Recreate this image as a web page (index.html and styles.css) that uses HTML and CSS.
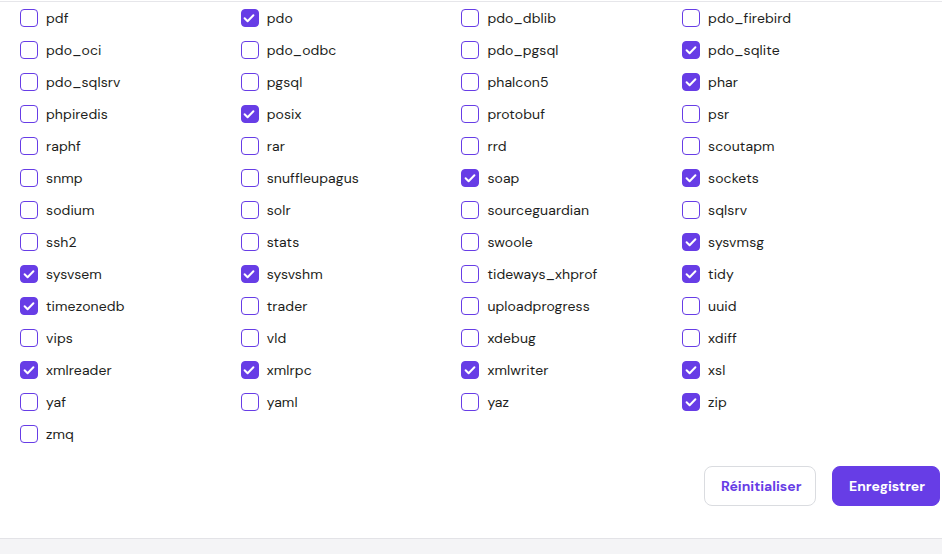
FILE: index.html
```html
<!DOCTYPE html>
<html lang="fr">
<head>
<meta charset="utf-8">
<link rel="stylesheet" href="styles.css">
</head>
<body>
<div class="page">
  <div class="card">
    <div class="grid">
      <label class="item"><span class="box"></span><span class="name">pdf</span></label>
      <label class="item"><span class="box checked"><svg viewBox="0 0 18 18"><path d="M4.6 9.3l3 2.9 5.8-6"/></svg></span><span class="name">pdo</span></label>
      <label class="item"><span class="box"></span><span class="name">pdo_dblib</span></label>
      <label class="item"><span class="box"></span><span class="name">pdo_firebird</span></label>

      <label class="item"><span class="box"></span><span class="name">pdo_oci</span></label>
      <label class="item"><span class="box"></span><span class="name">pdo_odbc</span></label>
      <label class="item"><span class="box"></span><span class="name">pdo_pgsql</span></label>
      <label class="item"><span class="box checked"><svg viewBox="0 0 18 18"><path d="M4.6 9.3l3 2.9 5.8-6"/></svg></span><span class="name">pdo_sqlite</span></label>

      <label class="item"><span class="box"></span><span class="name">pdo_sqlsrv</span></label>
      <label class="item"><span class="box"></span><span class="name">pgsql</span></label>
      <label class="item"><span class="box"></span><span class="name">phalcon5</span></label>
      <label class="item"><span class="box checked"><svg viewBox="0 0 18 18"><path d="M4.6 9.3l3 2.9 5.8-6"/></svg></span><span class="name">phar</span></label>

      <label class="item"><span class="box"></span><span class="name">phpiredis</span></label>
      <label class="item"><span class="box checked"><svg viewBox="0 0 18 18"><path d="M4.6 9.3l3 2.9 5.8-6"/></svg></span><span class="name">posix</span></label>
      <label class="item"><span class="box"></span><span class="name">protobuf</span></label>
      <label class="item"><span class="box"></span><span class="name">psr</span></label>

      <label class="item"><span class="box"></span><span class="name">raphf</span></label>
      <label class="item"><span class="box"></span><span class="name">rar</span></label>
      <label class="item"><span class="box"></span><span class="name">rrd</span></label>
      <label class="item"><span class="box"></span><span class="name">scoutapm</span></label>

      <label class="item"><span class="box"></span><span class="name">snmp</span></label>
      <label class="item"><span class="box"></span><span class="name">snuffleupagus</span></label>
      <label class="item"><span class="box checked"><svg viewBox="0 0 18 18"><path d="M4.6 9.3l3 2.9 5.8-6"/></svg></span><span class="name">soap</span></label>
      <label class="item"><span class="box checked"><svg viewBox="0 0 18 18"><path d="M4.6 9.3l3 2.9 5.8-6"/></svg></span><span class="name">sockets</span></label>

      <label class="item"><span class="box"></span><span class="name">sodium</span></label>
      <label class="item"><span class="box"></span><span class="name">solr</span></label>
      <label class="item"><span class="box"></span><span class="name">sourceguardian</span></label>
      <label class="item"><span class="box"></span><span class="name">sqlsrv</span></label>

      <label class="item"><span class="box"></span><span class="name">ssh2</span></label>
      <label class="item"><span class="box"></span><span class="name">stats</span></label>
      <label class="item"><span class="box"></span><span class="name">swoole</span></label>
      <label class="item"><span class="box checked"><svg viewBox="0 0 18 18"><path d="M4.6 9.3l3 2.9 5.8-6"/></svg></span><span class="name">sysvmsg</span></label>

      <label class="item"><span class="box checked"><svg viewBox="0 0 18 18"><path d="M4.6 9.3l3 2.9 5.8-6"/></svg></span><span class="name">sysvsem</span></label>
      <label class="item"><span class="box checked"><svg viewBox="0 0 18 18"><path d="M4.6 9.3l3 2.9 5.8-6"/></svg></span><span class="name">sysvshm</span></label>
      <label class="item"><span class="box"></span><span class="name">tideways_xhprof</span></label>
      <label class="item"><span class="box checked"><svg viewBox="0 0 18 18"><path d="M4.6 9.3l3 2.9 5.8-6"/></svg></span><span class="name">tidy</span></label>

      <label class="item"><span class="box checked"><svg viewBox="0 0 18 18"><path d="M4.6 9.3l3 2.9 5.8-6"/></svg></span><span class="name">timezonedb</span></label>
      <label class="item"><span class="box"></span><span class="name">trader</span></label>
      <label class="item"><span class="box"></span><span class="name">uploadprogress</span></label>
      <label class="item"><span class="box"></span><span class="name">uuid</span></label>

      <label class="item"><span class="box"></span><span class="name">vips</span></label>
      <label class="item"><span class="box"></span><span class="name">vld</span></label>
      <label class="item"><span class="box"></span><span class="name">xdebug</span></label>
      <label class="item"><span class="box"></span><span class="name">xdiff</span></label>

      <label class="item"><span class="box checked"><svg viewBox="0 0 18 18"><path d="M4.6 9.3l3 2.9 5.8-6"/></svg></span><span class="name">xmlreader</span></label>
      <label class="item"><span class="box checked"><svg viewBox="0 0 18 18"><path d="M4.6 9.3l3 2.9 5.8-6"/></svg></span><span class="name">xmlrpc</span></label>
      <label class="item"><span class="box checked"><svg viewBox="0 0 18 18"><path d="M4.6 9.3l3 2.9 5.8-6"/></svg></span><span class="name">xmlwriter</span></label>
      <label class="item"><span class="box checked"><svg viewBox="0 0 18 18"><path d="M4.6 9.3l3 2.9 5.8-6"/></svg></span><span class="name">xsl</span></label>

      <label class="item"><span class="box"></span><span class="name">yaf</span></label>
      <label class="item"><span class="box"></span><span class="name">yaml</span></label>
      <label class="item"><span class="box"></span><span class="name">yaz</span></label>
      <label class="item"><span class="box checked"><svg viewBox="0 0 18 18"><path d="M4.6 9.3l3 2.9 5.8-6"/></svg></span><span class="name">zip</span></label>

      <label class="item"><span class="box"></span><span class="name">zmq</span></label>
    </div>
    <div class="actions">
      <button class="btn btn-outline">Réinitialiser</button>
      <button class="btn btn-primary">Enregistrer</button>
    </div>
  </div>
</div>
</body>
</html>
```
FILE: styles.css
```css
* { box-sizing: border-box; }
html, body { margin: 0; padding: 0; }
body {
  background: #f4f4f6;
  font-family: "DM Sans", Inter, "Liberation Sans", sans-serif;
  color: #1d1e20;
  width: 942px;
  height: 554px;
  overflow: hidden;
}
.page {
  background: #ffffff;
  padding-top: 1px;
}
.card {
  background: #ffffff;
  border-top: 1px solid #e6e6ea;
  border-bottom: 1px solid #e3e3e7;
  padding: 0 2px 32px 20px;
}
.grid {
  display: grid;
  grid-template-columns: repeat(4, 220.7px);
  grid-auto-rows: 32px;
}
.item {
  display: flex;
  align-items: center;
  gap: 8px;
  font-size: 14px;
  cursor: pointer;
}
.box {
  width: 18px;
  height: 18px;
  flex: 0 0 18px;
  border: 1.5px solid #673de6;
  border-radius: 4px;
  background: #fff;
  position: relative;
}
.box.checked {
  background: #673de6;
  border-color: #673de6;
}
.box svg {
  position: absolute;
  left: -1.5px;
  top: -1.5px;
  width: 18px;
  height: 18px;
}
.box svg path {
  fill: none;
  stroke: #fff;
  stroke-width: 2;
  stroke-linecap: round;
  stroke-linejoin: round;
}
.name {
  line-height: 18px;
  letter-spacing: 0.1px;
}
.actions {
  display: flex;
  justify-content: flex-end;
  gap: 16px;
  margin-top: 16px;
}
.btn {
  height: 40px;
  border-radius: 8px;
  font-family: inherit;
  font-size: 14px;
  font-weight: 700;
  padding: 0 16px;
  cursor: pointer;
}
.btn-outline {
  background: #fff;
  border: 1px solid #dadce0;
  color: #673de6;
  width: 112px;
}
.btn-primary {
  background: #673de6;
  border: 1px solid #673de6;
  color: #fff;
  width: 108px;
}
```
